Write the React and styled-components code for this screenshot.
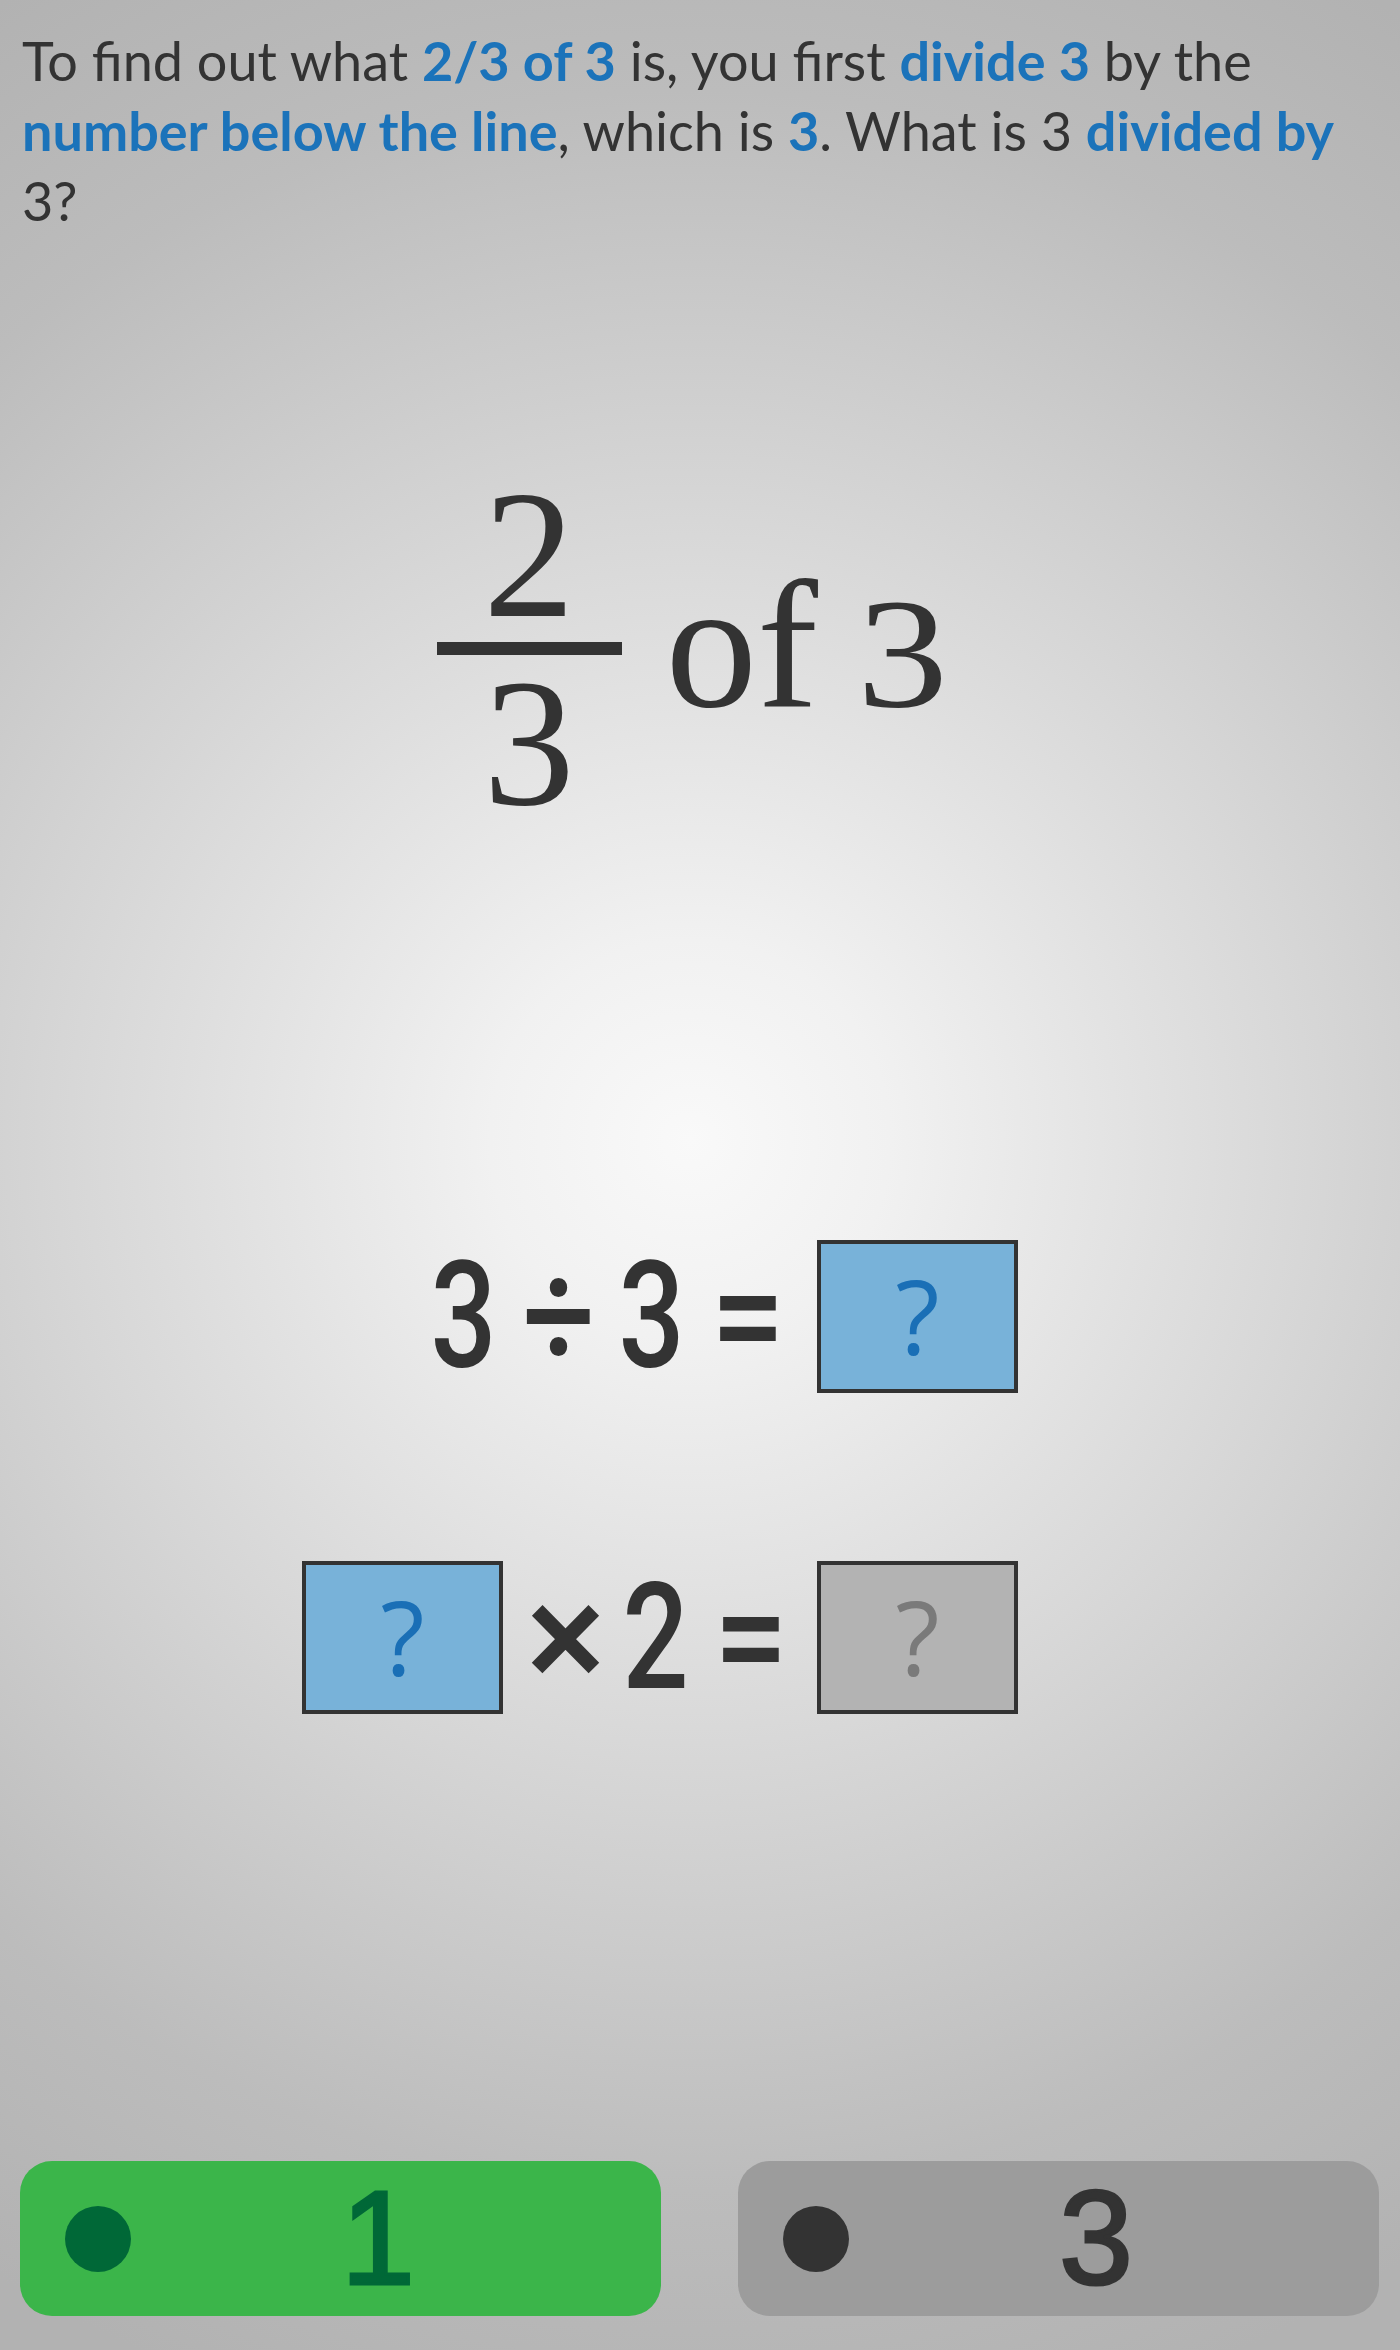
import React from "react";
import styled, { createGlobalStyle } from "styled-components";

const GlobalStyle = createGlobalStyle`
  html, body {
    margin: 0;
    padding: 0;
  }
  body {
    background: #b4b4b4;
  }
`;

const Page = styled.div`
  min-height: 2350px;
  display: flex;
  flex-direction: column;
  box-sizing: border-box;
  background: radial-gradient(
    circle 1400px at 690px 1140px,
    #f9f9f9 0px,
    #f1f1f1 200px,
    #d7d7d7 620px,
    #bcbcbc 1050px,
    #b2b2b2 1330px
  );
  color: #333333;
`;

const Prompt = styled.p`
  margin: 0;
  padding: 26px 22px 0;
  font-family: Lato, "Open Sans", sans-serif;
  font-size: 54px;
  line-height: 70px;
  color: #333333;
`;

const Key = styled.strong`
  font-weight: 700;
  color: #1b73ba;
`;

const Expression = styled.div`
  margin-top: 246px;
  padding-right: 14px;
  display: flex;
  justify-content: center;
  align-items: center;
  font-family: "Liberation Serif", "Times New Roman", serif;
  color: #333333;
`;

const Fraction = styled.div`
  display: flex;
  flex-direction: column;
  align-items: center;
  width: 185px;
`;

const FracDigit = styled.span`
  font-size: 183px;
  line-height: 0.8;
`;

const FracBar = styled.div`
  width: 185px;
  height: 13px;
  background: #333333;
  margin: 14px 0 15px;
`;

const OfText = styled.span`
  margin-left: 44px;
  margin-bottom: 10px;
  font-size: 183px;
  line-height: 1;
`;

const OfNumber = styled.span`
  display: inline-block;
  margin-left: 39px;
  margin-right: 14px;
  font-size: 157px;
  transform: scaleX(1.16);
  transform-origin: left center;
`;

const Equations = styled.div`
  margin-top: 423px;
  padding-right: 382px;
  display: flex;
  flex-direction: column;
  align-items: flex-end;
  gap: 168px;
`;

const EqRow = styled.div`
  display: flex;
  align-items: center;
`;

const Sym = styled.span`
  display: flex;
  justify-content: center;
  width: ${(p) => p.$w}px;
  margin-left: ${(p) => p.$ml || 0}px;
  font-family: Roboto, "Liberation Sans", sans-serif;
  font-weight: 500;
  font-size: 149px;
  line-height: 1;
  color: #333333;
  white-space: nowrap;
  transform: scaleX(${(p) => p.$s});
`;

const AnswerBox = styled.div`
  width: 201px;
  height: 153px;
  margin-left: ${(p) => p.$ml || 0}px;
  box-sizing: border-box;
  border: 4px solid #333333;
  background: ${(p) => (p.$muted ? "#b3b3b3" : "#78b2d9")};
  display: flex;
  align-items: center;
  justify-content: center;
  font-family: "Open Sans", Lato, sans-serif;
  font-size: 102px;
  line-height: 1;
  color: ${(p) => (p.$muted ? "#7a7a7a" : "#1a6fb6")};
`;

const Spacer = styled.div`
  flex: 1;
`;

const Choices = styled.div`
  display: flex;
  justify-content: space-between;
  padding: 0 21px 34px 20px;
`;

const Choice = styled.button`
  width: 641px;
  height: 155px;
  border: none;
  border-radius: 32px;
  padding: 0 36px 0 45px;
  display: flex;
  align-items: center;
  background: ${(p) => (p.$active ? "#3bb54a" : "#9c9c9c")};
  color: ${(p) => (p.$active ? "#006837" : "#333333")};
  cursor: pointer;
`;

const Dot = styled.span`
  flex: none;
  width: 66px;
  height: 66px;
  border-radius: 50%;
  background: currentColor;
`;

const ChoiceLabel = styled.span`
  flex: 1;
  text-align: center;
  font-family: "Liberation Sans", Arial, sans-serif;
  font-size: 133px;
  line-height: 1;
  -webkit-text-stroke: 3px currentColor;
`;

export default function App() {
  return (
    <>
      <GlobalStyle />
      <Page>
        <Prompt>
          To find out what <Key>2/3 of 3</Key> is, you first <Key>divide 3</Key> by the
          <br />
          <Key>number below the line</Key>, which is <Key>3</Key>. What is 3 <Key>divided by</Key>
          <br />
          3?
        </Prompt>

        <Expression>
          <Fraction>
            <FracDigit>2</FracDigit>
            <FracBar />
            <FracDigit>3</FracDigit>
          </Fraction>
          <OfText>
            of<OfNumber>3</OfNumber>
          </OfText>
        </Expression>

        <Equations>
          <EqRow>
            <Sym $w={55} $s={0.78}>3</Sym>
            <Sym $w={58} $s={0.85} $ml={39}>÷</Sym>
            <Sym $w={55} $s={0.78} $ml={36}>3</Sym>
            <Sym $w={56} $s={0.88} $ml={41}>=</Sym>
            <AnswerBox $ml={41}>?</AnswerBox>
          </EqRow>
          <EqRow>
            <AnswerBox>?</AnswerBox>
            <Sym $w={58} $s={1} $ml={34}>×</Sym>
            <Sym $w={57} $s={0.78} $ml={32}>2</Sym>
            <Sym $w={56} $s={0.88} $ml={39}>=</Sym>
            <AnswerBox $muted $ml={38}>?</AnswerBox>
          </EqRow>
        </Equations>

        <Spacer />

        <Choices>
          <Choice $active>
            <Dot />
            <ChoiceLabel>1</ChoiceLabel>
          </Choice>
          <Choice>
            <Dot />
            <ChoiceLabel>3</ChoiceLabel>
          </Choice>
        </Choices>
      </Page>
    </>
  );
}
